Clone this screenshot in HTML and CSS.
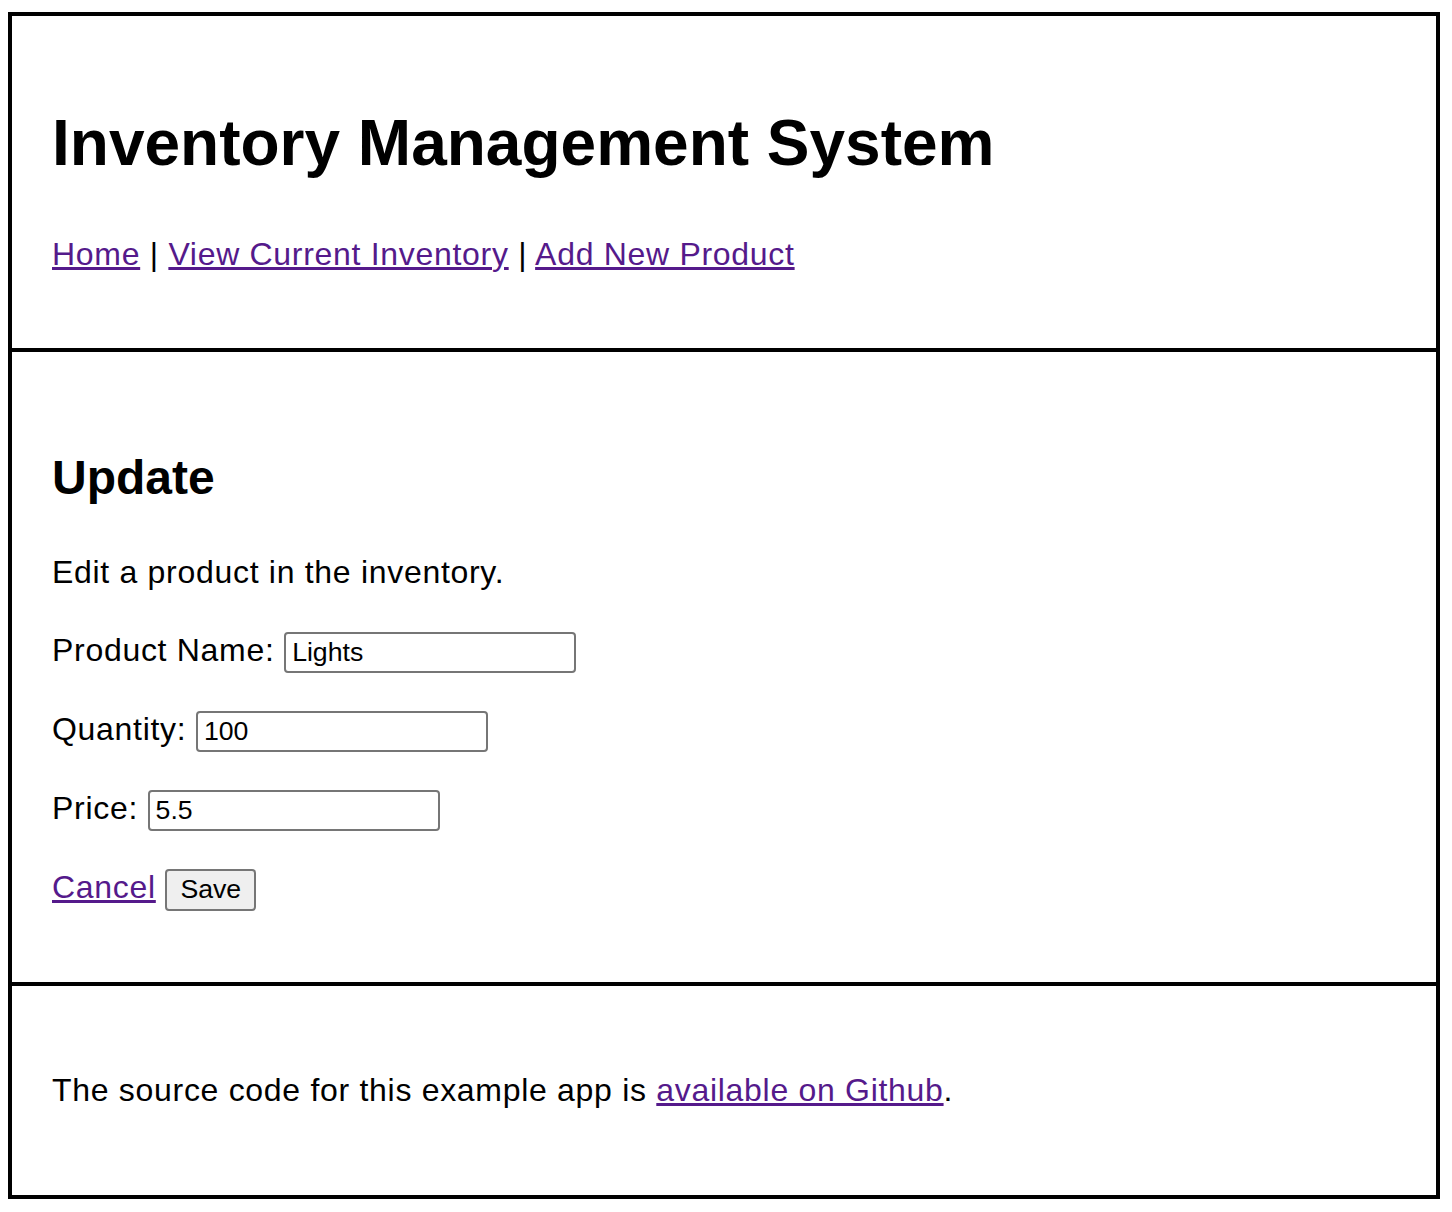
FILE: index.html
```html
<!DOCTYPE html>
<html lang="en">
<head>
<meta charset="utf-8">
<title>Inventory Management System</title>
<link rel="stylesheet" href="styles.css">
</head>
<body>
<div class="page">
  <header class="section header">
    <h1 class="title">Inventory Management System</h1>
    <p class="nav"><a href="#">Home</a> | <a href="#">View Current Inventory</a> | <a href="#">Add New Product</a></p>
  </header>
  <main class="section main">
    <h2 class="heading">Update</h2>
    <p class="text">Edit a product in the inventory.</p>
    <form class="form">
      <p class="row"><label class="label">Product Name:</label> <input class="field" type="text" value="Lights"></p>
      <p class="row"><label class="label">Quantity:</label> <input class="field" type="text" value="100"></p>
      <p class="row"><label class="label">Price:</label> <input class="field" type="text" value="5.5"></p>
      <p class="row actions"><a href="#">Cancel</a> <button class="btn" type="button">Save</button></p>
    </form>
  </main>
  <footer class="section footer">
    <p class="text">The source code for this example app is <a href="#">available on Github</a>.</p>
  </footer>
</div>
</body>
</html>
```
FILE: styles.css
```css
html, body {
  background: #fff;
}
body {
  margin: 12px 12px 13px 8px;
  font-family: "Liberation Sans", Arial, sans-serif;
  font-size: 32px;
  line-height: 1.4;
  color: #000;
}
.page {
  border: 4px solid #000;
  display: flex;
  flex-direction: column;
}
.section {
  padding: 40px;
}
.section + .section {
  border-top: 4px solid #000;
}
a {
  color: #551a8b;
}
.title {
  font-size: 64px;
  font-weight: bold;
  margin: 43px 0;
}
.nav, .text, .row {
  letter-spacing: 0.7px;
  margin: 32px 0;
}
.row {
  margin: 34px 0;
}
.actions {
  margin-bottom: 31px;
}
.heading {
  font-size: 48px;
  font-weight: bold;
  margin: 52px 0 38px;
}
.form {
  margin: 0;
}
.label {
  letter-spacing: 0.7px;
}
.field {
  box-sizing: border-box;
  width: 292px;
  height: 41px;
  border: 2px solid #767676;
  border-radius: 4px;
  padding: 2px 6px;
  font-family: "Liberation Sans", Arial, sans-serif;
  font-size: 26.67px;
  letter-spacing: 0;
  color: #000;
  background: #fff;
}
.btn {
  box-sizing: border-box;
  height: 42px;
  padding: 0 13px;
  border: 2px solid #767676;
  border-radius: 4px;
  background: #efefef;
  font-family: "Liberation Sans", Arial, sans-serif;
  font-size: 26.67px;
  letter-spacing: 0;
  color: #000;
}
.footer .text {
  margin: 42px 0;
}
```
